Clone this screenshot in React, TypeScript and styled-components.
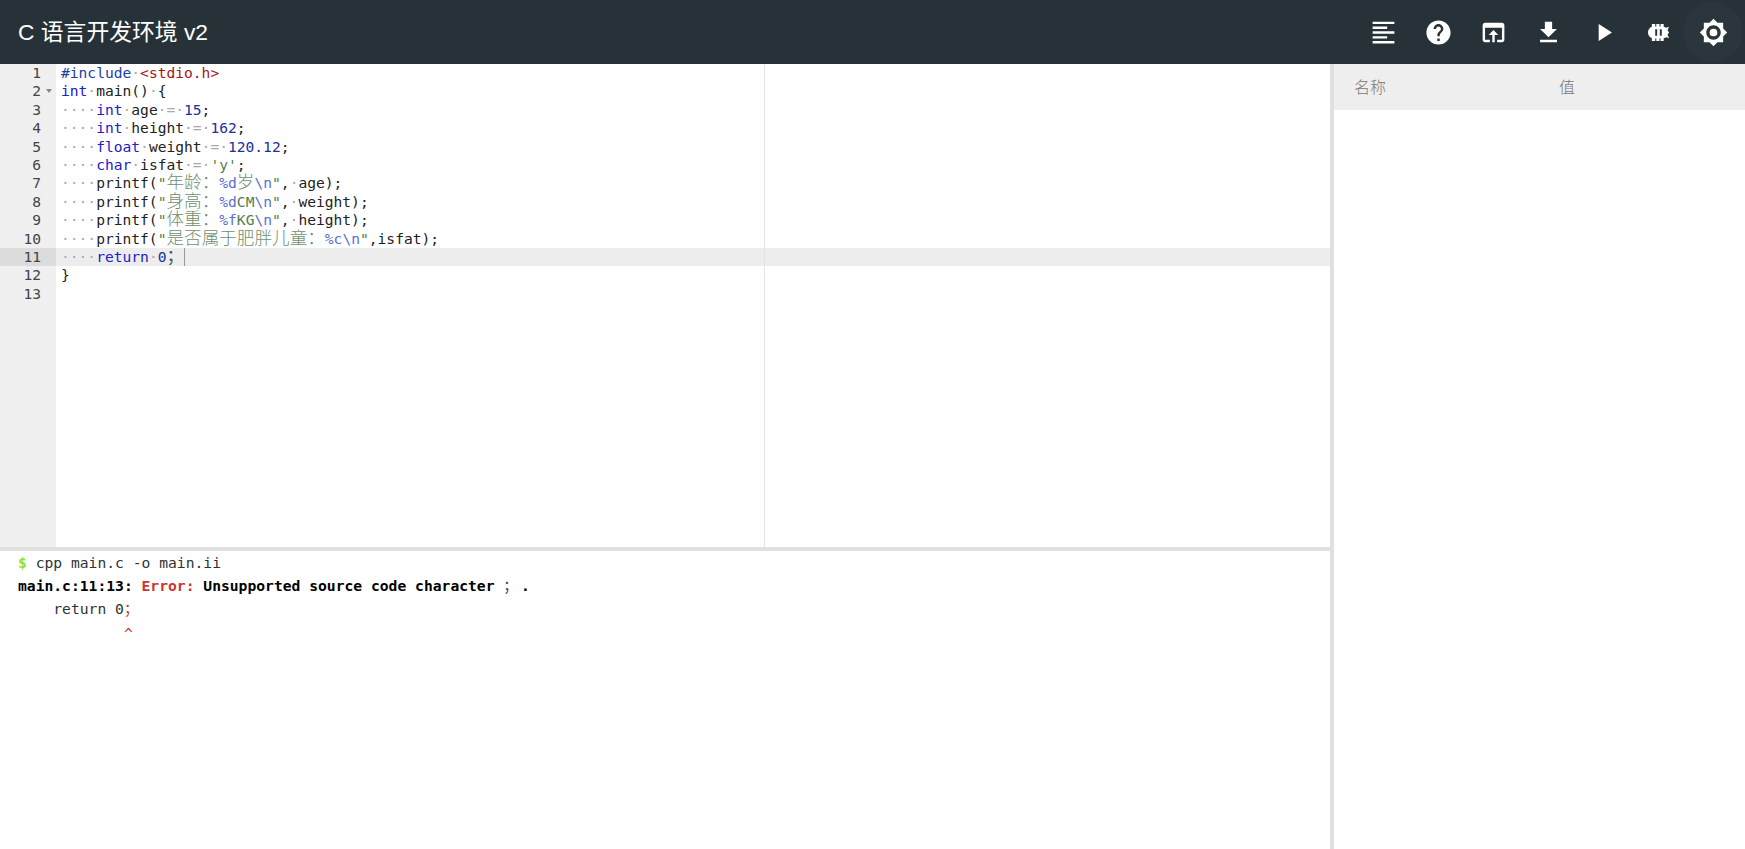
import styled, { createGlobalStyle } from "styled-components";

const GlobalStyle = createGlobalStyle`
  html, body {
    margin: 0;
    height: 100%;
    background-color: #fff;
    overflow: hidden;
  }
`;

const toolIcons = [
  "M15 15H3v2h12v-2zm0-8H3v2h12V7zM3 13h18v-2H3v2zm0 8h18v-2H3v2zM3 3v2h18V3H3z",
  "M12 2C6.48 2 2 6.48 2 12s4.48 10 10 10 10-4.48 10-10S17.52 2 12 2zm1 17h-2v-2h2v2zm2.07-7.75l-.9.92C13.45 12.9 13 13.5 13 15h-2v-.5c0-1.1.45-2.1 1.17-2.83l1.24-1.26c.37-.36.59-.86.59-1.41 0-1.1-.9-2-2-2s-2 .9-2 2H8c0-2.21 1.79-4 4-4s4 1.79 4 4c0 .88-.36 1.68-.93 2.25z",
  "M19 4H5c-1.11 0-2 .9-2 2v12c0 1.1.89 2 2 2h4v-2H5V8h14v10h-4v2h4c1.1 0 2-.9 2-2V6c0-1.1-.89-2-2-2zm-7 6l-4 4h3v6h2v-6h3l-4-4z",
  "M19 9h-4V3H9v6H5l7 7 7-7zM5 18v2h14v-2H5z",
  "M8 5v14l11-7z",
  "M6.500 5h2.800v2h.9V5h2.600v2h.9V5h2.600v2.300L18.500 8l2.200-.8-1.200 3 1.200 1.800-1.200 1.800 1.200 3-2.200-.8-2.200.7V19h-2.600v-2h-.9v2h-2.600v-2h-.9v2H6.500v-2.300C4.600 16 3.300 14.200 3.300 12S4.600 8 6.500 7.300zM9.300 9.300v5.400h1.600V9.300zm3.800 0v5.400h1.600V9.300z",
  "M20 15.31L23.31 12 20 8.69V4h-4.690L12 .69 8.690 4H4v4.690L.69 12 4 15.310V20h4.690L12 23.310 15.310 20H20v-4.690zM12 18c-3.310 0-6-2.690-6-6s2.690-6 6-6 6 2.690 6 6-2.690 6-6 6zm0-9.200a3.200 3.200 0 1 0 0 6.400 3.200 3.200 0 0 0 0-6.400z",
];

type Tok = [string, string];

const codeLines: Tok[][] = [
  [["meta", "#include"], ["ws", "·"], ["str", "<stdio.h>"]],
  [["kw", "int"], ["ws", "·"], ["id", "main()"], ["ws", "·"], ["id", "{"]],
  [["ws", "····"], ["kw", "int"], ["ws", "·"], ["id", "age"], ["ws", "·=·"], ["num", "15"], ["id", ";"]],
  [["ws", "····"], ["kw", "int"], ["ws", "·"], ["id", "height"], ["ws", "·=·"], ["num", "162"], ["id", ";"]],
  [["ws", "····"], ["kw", "float"], ["ws", "·"], ["id", "weight"], ["ws", "·=·"], ["num", "120.12"], ["id", ";"]],
  [["ws", "····"], ["kw", "char"], ["ws", "·"], ["id", "isfat"], ["ws", "·=·"], ["chr", "'y'"], ["id", ";"]],
  [["ws", "····"], ["id", "printf("], ["chr", "\""], ["cjk", "年龄："], ["esc", "%d"], ["cjk", "岁"], ["esc", "\\n"], ["chr", "\""], ["id", ","], ["ws", "·"], ["id", "age);"]],
  [["ws", "····"], ["id", "printf("], ["chr", "\""], ["cjk", "身高："], ["esc", "%d"], ["chr", "CM"], ["esc", "\\n"], ["chr", "\""], ["id", ","], ["ws", "·"], ["id", "weight);"]],
  [["ws", "····"], ["id", "printf("], ["chr", "\""], ["cjk", "体重："], ["esc", "%f"], ["chr", "KG"], ["esc", "\\n"], ["chr", "\""], ["id", ","], ["ws", "·"], ["id", "height);"]],
  [["ws", "····"], ["id", "printf("], ["chr", "\""], ["cjk", "是否属于肥胖儿童："], ["esc", "%c\\n"], ["chr", "\""], ["id", ",isfat);"]],
  [["ws", "····"], ["kw", "return"], ["ws", "·"], ["num", "0"], ["cn", "；"]],
  [["id", "}"]],
  [],
];

const App = () => {
  return (
    <Page>
      <GlobalStyle />
      <Header>
        <Title>C 语言开发环境 v2</Title>
        <Toolbar>
          {toolIcons.map((d, i) => (
            <ToolButton key={d} $active={i === 6}>
              <svg width="29" height="29" viewBox="0 0 24 24" fill="#fff" fillRule="evenodd">
                <path d={d} />
              </svg>
            </ToolButton>
          ))}
        </Toolbar>
      </Header>
      <Body>
        <LeftColumn>
          <Editor>
            <Gutter>
              {codeLines.map((_, i) => (
                <GutterCell key={i} $active={i === 10}>
                  {i + 1}
                  {i === 1 && <FoldMark />}
                </GutterCell>
              ))}
            </Gutter>
            <Code>
              <PrintMargin />
              {codeLines.map((line, i) => (
                <CodeLine key={i} $active={i === 10}>
                  {line.map(([kind, text], j) => (
                    <Token key={j} $kind={kind}>
                      {text}
                    </Token>
                  ))}
                  {i === 10 && <Cursor />}
                </CodeLine>
              ))}
            </Code>
          </Editor>
          <Terminal>
            <TermLine>
              <Prompt>$</Prompt> cpp main.c -o main.ii
            </TermLine>
            <TermLine $bold>
              main.c:11:13: <ErrorLabel>Error:</ErrorLabel> Unsupported source code character <Semi>；</Semi>.
            </TermLine>
            <TermLine>
              {"    return 0"}
              <Semi $red>；</Semi>
            </TermLine>
            <CaretLine>{"            ^"}</CaretLine>
          </Terminal>
        </LeftColumn>
        <VarPanel>
          <VarHead>
            <VarName>名称</VarName>
            <VarValue>值</VarValue>
          </VarHead>
        </VarPanel>
      </Body>
    </Page>
  );
};

const tokenColors: Record<string, string> = {
  meta: "#1c3fa8",
  str: "#a31515",
  kw: "#2020c8",
  id: "#222",
  ws: "#aaa",
  num: "#1c2fa0",
  chr: "#4f7f4f",
  cjk: "#6f8f6f",
  cn: "#555",
  esc: "#5a6fd0",
};

const Page = styled.div`
  display: flex;
  flex-direction: column;
  width: 1745px;
  height: 849px;
  overflow: hidden;
`;

const Header = styled.header`
  display: flex;
  justify-content: space-between;
  align-items: center;
  flex: 0 0 64px;
  padding-left: 18px;
  background-color: #263238;
`;

const Title = styled.div`
  margin-top: -3px;
  color: #fff;
  font-family: "Liberation Sans", "Noto Sans CJK SC", sans-serif;
  font-size: 22.8px;
`;

const Toolbar = styled.div`
  display: flex;
  align-items: center;
  padding-right: 2px;
`;

const ToolButton = styled.button<{ $active?: boolean }>`
  display: flex;
  justify-content: center;
  align-items: center;
  width: 60px;
  height: 60px;
  margin-left: -5px;
  padding: 0;
  border: none;
  border-radius: 50%;
  background-color: ${(p) => (p.$active ? "rgba(255, 255, 255, 0.02)" : "transparent")};
`;

const Body = styled.div`
  display: flex;
  flex: 1;
  min-height: 0;
`;

const LeftColumn = styled.div`
  display: flex;
  flex-direction: column;
  flex: 0 0 1330px;
  min-width: 0;
  border-right: 4px solid #e0e0e0;
`;

const Editor = styled.div`
  display: flex;
  flex: 0 0 483px;
  border-bottom: 4px solid #e0e0e0;
  font-family: "DejaVu Sans Mono", "Noto Sans CJK SC", monospace;
  font-size: 14.6px;
  line-height: 18.4px;
`;

const Gutter = styled.div`
  flex: 0 0 56px;
  background-color: #f0f0f0;
  color: #444;
`;

const GutterCell = styled.div<{ $active?: boolean }>`
  position: relative;
  height: 18.4px;
  padding-right: 15px;
  text-align: right;
  background-color: ${(p) => (p.$active ? "#dcdcdc" : "transparent")};
`;

const FoldMark = styled.span`
  position: absolute;
  right: 4px;
  top: 7px;
  border-left: 3px solid transparent;
  border-right: 3px solid transparent;
  border-top: 4px solid #888;
`;

const Code = styled.div`
  position: relative;
  flex: 1;
  min-width: 0;
`;

const PrintMargin = styled.div`
  position: absolute;
  left: 708px;
  top: 0;
  bottom: 0;
  width: 1px;
  background-color: #e4e4e4;
`;

const CodeLine = styled.div<{ $active?: boolean }>`
  height: 18.4px;
  padding-left: 5px;
  white-space: pre;
  background-color: ${(p) => (p.$active ? "rgba(0, 0, 0, 0.07)" : "transparent")};
`;

const Token = styled.span<{ $kind: string }>`
  color: ${(p) => tokenColors[p.$kind]};
  font-size: ${(p) => (p.$kind === "cjk" || p.$kind === "cn" ? "17.6px" : "inherit")};
  line-height: 0;
  font-weight: ${(p) => (p.$kind === "cjk" ? 300 : 400)};
`;

const Cursor = styled.span`
  display: inline-block;
  width: 1px;
  height: 18px;
  vertical-align: top;
  background-color: #999;
`;

const Terminal = styled.div`
  flex: 1;
  padding: 0 18px;
  background-color: #fff;
  color: #2e3436;
  font-family: "DejaVu Sans Mono", "Noto Sans CJK SC", monospace;
  font-size: 14.67px;
`;

const TermLine = styled.div<{ $bold?: boolean }>`
  height: 23px;
  line-height: 23px;
  white-space: pre;
  color: ${(p) => (p.$bold ? "#000" : "#2e3436")};
  font-weight: ${(p) => (p.$bold ? 700 : 400)};
`;

const CaretLine = styled(TermLine)`
  color: #cc3333;
  padding-top: 2px;
`;

const Prompt = styled.span`
  color: #8ae234;
  font-weight: 700;
`;

const ErrorLabel = styled.span`
  color: #cc3333;
`;

const Semi = styled.span<{ $red?: boolean }>`
  display: inline-block;
  width: 17.66px;
  color: ${(p) => (p.$red ? "#cc3333" : "#444")};
  font-weight: 400;
`;

const VarPanel = styled.aside`
  flex: 1;
  min-width: 0;
`;

const VarHead = styled.div`
  display: flex;
  align-items: center;
  height: 43px;
  padding: 0 0 3px 20px;
  background-color: #eee;
  color: #787878;
  font-family: "Liberation Serif", "Noto Sans CJK SC", serif;
  font-size: 16px;
  font-weight: 300;
`;

const VarName = styled.div`
  flex: 0 0 205px;
`;

const VarValue = styled.div`
  flex: 1;
`;

export default App;
